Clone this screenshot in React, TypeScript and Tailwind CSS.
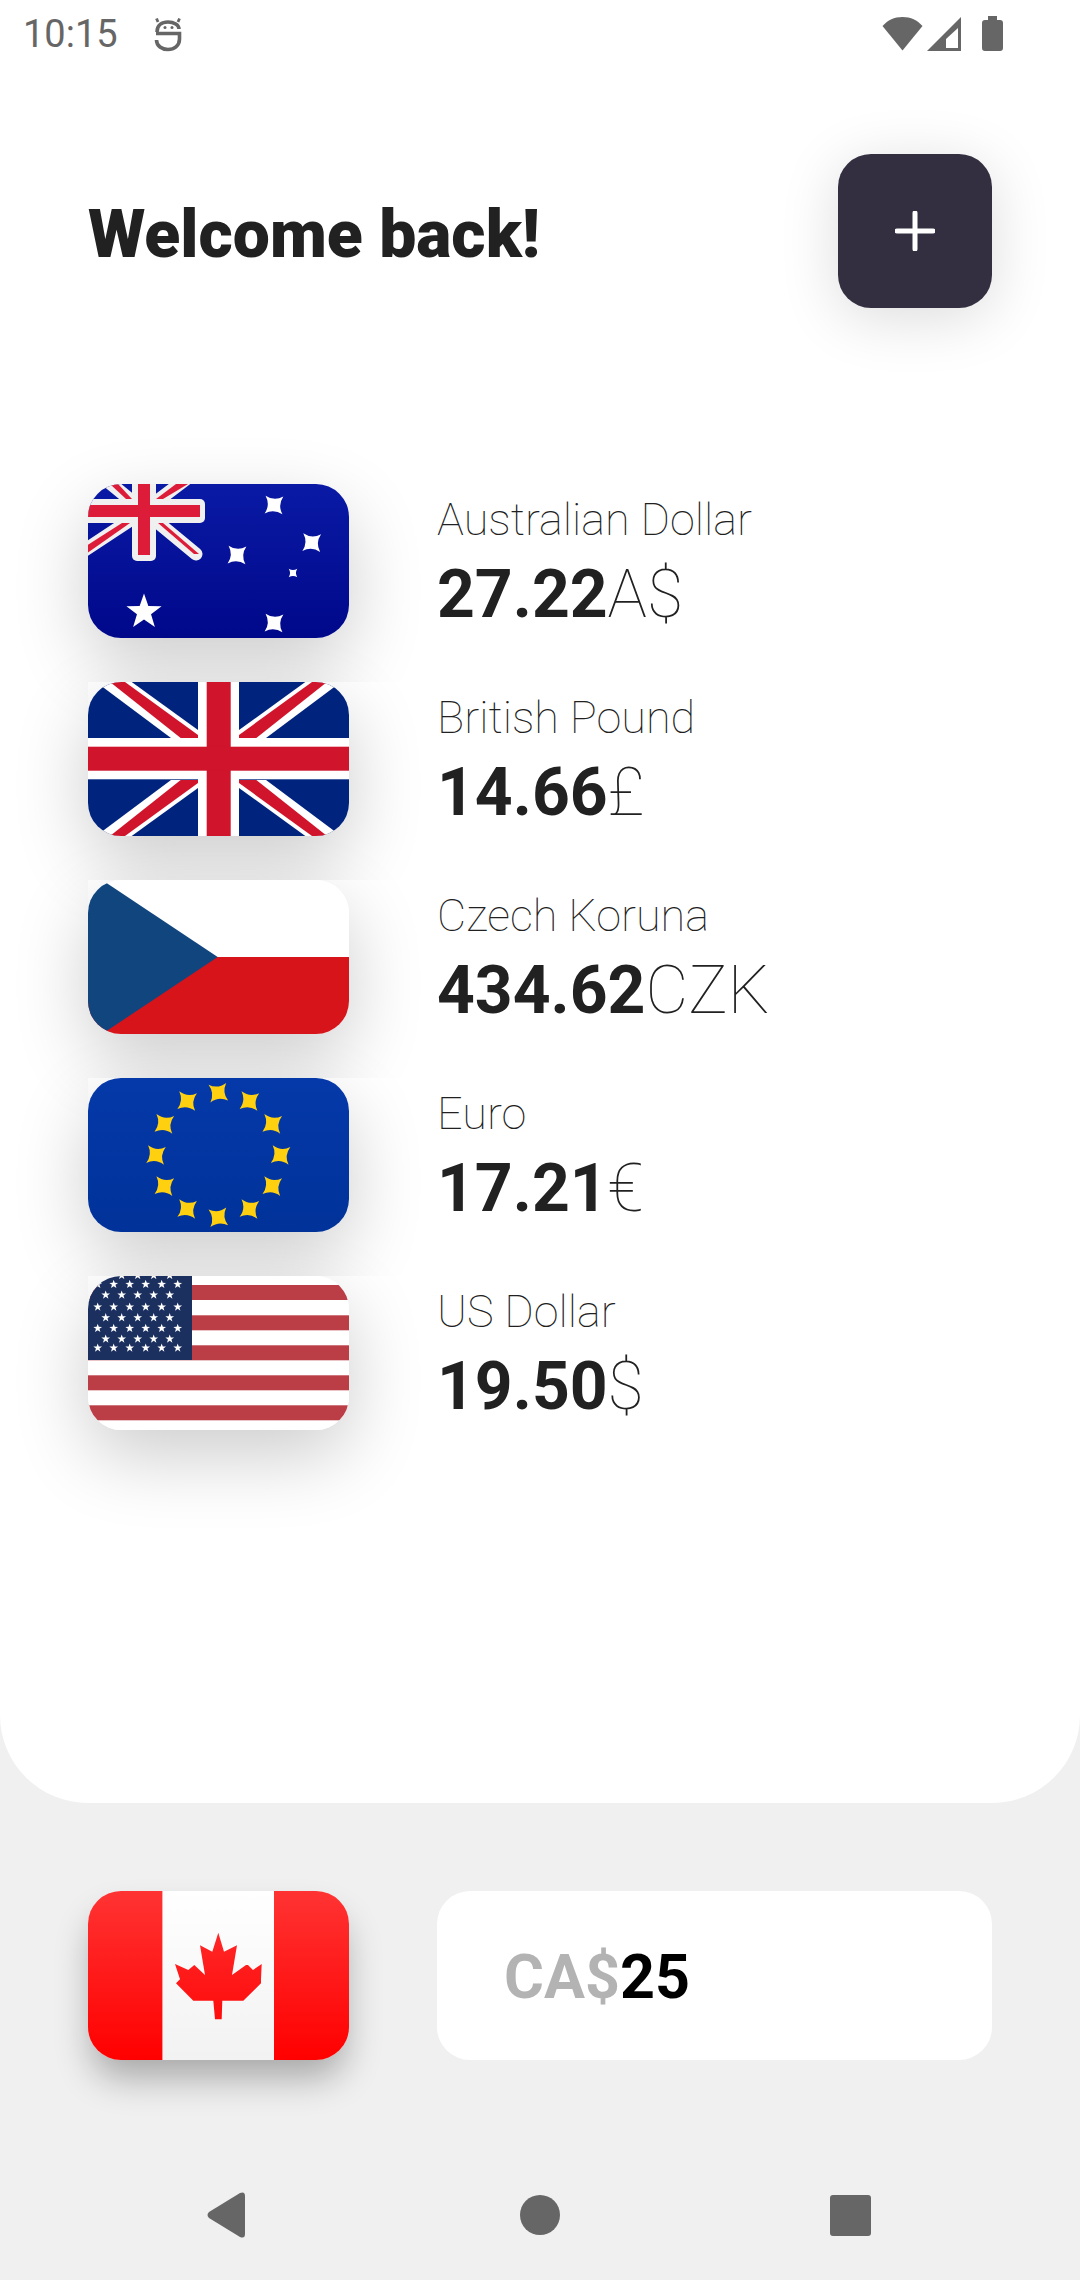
import React from "react";

const star4 = "M-8.9,-8.9 Q0,-3.5 8.9,-8.9 Q3.5,0 8.9,8.9 Q0,3.5 -8.9,8.9 Q-3.5,0 -8.9,-8.9Z";

// five point star centred on 0,0 with radius 1
const star5 = "M0,-1 L0.235,-0.324 L0.951,-0.309 L0.38,0.124 L0.588,0.809 L0,0.4 L-0.588,0.809 L-0.38,0.124 L-0.951,-0.309 L-0.235,-0.324Z";

const AustraliaFlag = () => (
  <svg viewBox="0 0 261 154" className="block w-full h-full">
    <defs>
      <linearGradient id="au" x1="0" y1="0" x2="0" y2="1">
        <stop offset="0" stopColor="#0a1aa5" />
        <stop offset="1" stopColor="#00088a" />
      </linearGradient>
    </defs>
    <rect width="261" height="154" fill="url(#au)" />
    <g stroke="#f0f0f0" strokeLinecap="round" fill="none" strokeWidth="13">
      <path d="M56 27 L108 70" />
      <path d="M56 27 L-12 72" />
      <path d="M56 27 L110 -14" />
      <path d="M56 27 L6 -14" />
    </g>
    <rect x="-6" y="15" width="123" height="24" rx="5" fill="#f0f0f0" />
    <rect x="44" y="-5" width="24" height="82" rx="5" fill="#f0f0f0" />
    <g fill="#dc1c38">
      <polygon points="70,39 75,39 111,70 106,70" />
      <polygon points="42,39 34,39 -2,62 -2,70" />
      <polygon points="68,15 75,15 100,0 88,0" />
      <polygon points="44,15 38,15 22,0 30,0" />
      <rect x="0" y="21" width="112" height="12" />
      <rect x="50" y="0" width="12" height="71" />
    </g>
    <g fill="#fff">
      <path d={star4} transform="translate(186 21) rotate(3)" />
      <path d={star4} transform="translate(223.7 58.7) rotate(3)" />
      <path d={star4} transform="translate(149 71) rotate(3)" />
      <path d={star4} transform="translate(205 89) scale(0.48)" />
      <path d={star4} transform="translate(186 139) rotate(3)" />
      <path d={star5} transform="translate(56 128) scale(18.5)" />
    </g>
  </svg>
);

const UkFlag = () => {
  const white = "8,0 83,56 110,56 110,48 43.7,0";
  const red = "22,0 37,0 110,53 110,56 92.7,56";
  const flips = ["", "translate(261 0) scale(-1 1)", "translate(0 154) scale(1 -1)", "translate(261 154) scale(-1 -1)"];
  return (
    <svg viewBox="0 0 261 154" className="block w-full h-full">
      <rect width="261" height="154" fill="#00247d" />
      {flips.map((t) => (
        <g key={t} transform={t}>
          <polygon points={white} fill="#fff" />
          <polygon points={red} fill="#cf142b" />
        </g>
      ))}
      <rect x="110" width="41" height="154" fill="#fff" />
      <rect y="56" width="261" height="41.3" fill="#fff" />
      <rect x="118.7" width="24" height="154" fill="#cf142b" />
      <rect y="64.7" width="261" height="24" fill="#cf142b" />
    </svg>
  );
};

const CzechFlag = () => (
  <svg viewBox="0 0 261 154" className="block w-full h-full">
    <rect width="261" height="77" fill="#fff" />
    <rect y="77" width="261" height="77" fill="#d7141a" />
    <polygon points="-1,-10 129.7,77 -1,164" fill="#11457e" />
  </svg>
);

const EuFlag = () => (
  <svg viewBox="0 0 261 154" className="block w-full h-full">
    <defs>
      <linearGradient id="eu" x1="0" y1="0" x2="0" y2="1">
        <stop offset="0" stopColor="#0539a9" />
        <stop offset="1" stopColor="#003299" />
      </linearGradient>
    </defs>
    <rect width="261" height="154" fill="url(#eu)" />
    {Array.from({ length: 12 }).map((_, i) => {
      const a = (i * Math.PI) / 6;
      const x = 130.3 + 62.3 * Math.sin(a);
      const y = 77 - 62.3 * Math.cos(a);
      return <path key={i} d={star4} fill="#ffd010" transform={`translate(${x} ${y}) rotate(${i % 6 === 0 ? -6 : 6})`} />;
    })}
  </svg>
);

const usRows = [-0.7, 8.3, 19, 31, 41.7, 52.3, 63, 72];

const UsFlag = () => (
  <svg viewBox="0 0 261 154" className="block w-full h-full">
    <rect width="261" height="154" fill="#fff" />
    {[9, 39.3, 69.3, 99.3, 129.3].map((y) => (
      <rect key={y} y={y} width="261" height="15" fill="#bb3e46" />
    ))}
    <rect width="104" height="84" fill="#1b305f" />
    {usRows.map((y, r) => {
      const odd = r % 2 === 1;
      const xs = odd ? [9.7, 25.7, 41.7, 57.7, 73.7, 89.7] : [17.7, 33.7, 49.7, 65.7, 81.7];
      return xs.map((x) => <path key={`${r}-${x}`} d={star5} fill="#fff" transform={`translate(${x} ${y}) scale(4.6)`} />);
    })}
  </svg>
);

const CanadaFlag = () => (
  <svg viewBox="0 0 261 169" className="block w-full h-full">
    <defs>
      <linearGradient id="caRed" gradientUnits="userSpaceOnUse" x1="0" y1="0" x2="0" y2="169">
        <stop offset="0" stopColor="#ff3333" />
        <stop offset="1" stopColor="#ff0000" />
      </linearGradient>
      <linearGradient id="caWhite" gradientUnits="userSpaceOnUse" x1="0" y1="0" x2="0" y2="169">
        <stop offset="0" stopColor="#ffffff" />
        <stop offset="1" stopColor="#f2f2f2" />
      </linearGradient>
    </defs>
    <rect width="261" height="169" fill="url(#caRed)" />
    <rect x="74.4" width="111.6" height="169" fill="url(#caWhite)" />
    <polygon
      fill="url(#caRed)"
      points="130.3,41.7 136,60.7 149,54.3 144,84 158,74 160,74 165,79 173.7,73 173,88.3 173,92.3 155.3,109.7 134.3,109.7 133.7,128.3 127,128.3 125.3,109.7 105.3,109.7 88,92.3 92,88.3 87,73 100.3,79 106.3,74 117,84 112,54.3 124.3,60.7"
    />
  </svg>
);

const accounts = [
  { name: "Australian Dollar", amount: "27.22", unit: "A$", flag: <AustraliaFlag /> },
  { name: "British Pound", amount: "14.66", unit: "£", flag: <UkFlag /> },
  { name: "Czech Koruna", amount: "434.62", unit: "CZK", flag: <CzechFlag /> },
  { name: "Euro", amount: "17.21", unit: "€", flag: <EuFlag /> },
  { name: "US Dollar", amount: "19.50", unit: "$", flag: <UsFlag /> },
];

const StatusBar = () => (
  <div className="flex h-[63px] items-center justify-between pl-[23px] pr-[77px] pt-[4px]">
    <div className="flex items-center">
      <span className="text-[38px] leading-none text-[#666666] font-normal">10:15</span>
      <svg width="28" height="36" viewBox="0 0 28 36" className="ml-[36px]" fill="none" stroke="#666666" strokeWidth="3.6">
        <path d="M3 16 C3 9 8 6 14 6 C20 6 25 9 25 13" />
        <path d="M2 17.5 H25.5 V23 C25.5 30 20 33.5 14 33.5 C8 33.5 2.5 30 2.5 24" />
        <path d="M4 6 L2.5 2.5 M24 6 L25.5 2.5" strokeWidth="2.8" />
        <circle cx="11" cy="11.5" r="1.5" fill="#666666" stroke="none" />
        <circle cx="18" cy="11.5" r="1.5" fill="#666666" stroke="none" />
      </svg>
    </div>
    <div className="flex items-center">
      <svg width="41" height="35" viewBox="0 0 41 35" fill="#666666">
        <path d="M0.5 10 C6 4 12 1 20.5 1 C29 1 35 4 40.5 10 L20.5 34.5 Z" />
      </svg>
      <svg width="35" height="35" viewBox="0 0 35 35" className="ml-[4px]" fill="#666666">
        <path fillRule="evenodd" d="M34 1 V35 H0 Z M31 12 L19 23 V32 H31 Z" />
      </svg>
      <svg width="21" height="35" viewBox="0 0 21 35" className="ml-[20px]" fill="#666666">
        <path d="M6 0 H15 V4 H18 A3 3 0 0 1 21 7 V32 A3 3 0 0 1 18 35 H3 A3 3 0 0 1 0 32 V7 A3 3 0 0 1 3 4 H6 Z" />
      </svg>
    </div>
  </div>
);

export default function App() {
  return (
    <div className="flex h-[2280px] w-[1080px] flex-col bg-[#f0f0f0] font-[Roboto,sans-serif]">
      {/* Main panel */}
      <div className="h-[1803px] rounded-b-[88px] bg-white">
        <StatusBar />

        <div className="mt-[91px] flex items-center justify-between px-[88px]">
          <h1 className="relative top-[4px] text-[66px] font-black leading-none text-[#212121]">Welcome back!</h1>
          <button className="flex h-[154px] w-[154px] items-center justify-center rounded-[33px] bg-[#332f40] shadow-[0_10px_60px_rgba(0,0,0,0.14)]">
            <svg width="40" height="40" viewBox="0 0 40 40" stroke="#ffffff" strokeWidth="5" strokeLinecap="round">
              <path d="M20 2 V38 M2 20 H38" />
            </svg>
          </button>
        </div>

        <div className="mt-[176px] flex flex-col gap-[44px] pl-[88px] pr-[88px]">
          {accounts.map((a) => (
            <div key={a.name} className="flex h-[154px] bg-white">
              <div className="h-[154px] w-[261px] overflow-hidden rounded-[33px] shadow-[0_26px_74px_rgba(0,0,0,0.2)]">{a.flag}</div>
              <div className="ml-[88px] flex flex-col pt-[11px] text-[#212121]">
                <div className="text-[45px] font-thin leading-[50px]">{a.name}</div>
                <div className="mt-[11px] text-[66px] font-bold leading-[78px]">
                  {a.amount}
                  <span className="font-thin">{a.unit}</span>
                </div>
              </div>
            </div>
          ))}
        </div>
      </div>

      {/* Converter input */}
      <div className="mt-[88px] flex gap-[88px] px-[88px]">
        <div className="h-[169px] w-[261px] shrink-0 overflow-hidden rounded-[33px] shadow-[0_22px_36px_-4px_rgba(0,0,0,0.3)]">
          <CanadaFlag />
        </div>
        <div className="flex h-[169px] flex-1 items-center rounded-[33px] bg-white pl-[67px] pt-[3px] text-[61px] font-bold leading-none">
          <span className="text-[#b3b3b3]">CA$</span>
          <span className="text-black">25</span>
        </div>
      </div>

      {/* Android nav bar */}
      <div className="mt-[132px] flex items-center pl-[207px]">
        <svg width="38" height="46" viewBox="0 0 38 46" fill="#666666">
          <path d="M33 1 Q38 -1 38 4 V42 Q38 47 33 45 L2 26 Q-1 23 2 20 Z" />
        </svg>
        <div className="ml-[275px] h-[40px] w-[40px] rounded-full bg-[#666666]" />
        <div className="ml-[270px] h-[41px] w-[41px] rounded-[3px] bg-[#666666]" />
      </div>
    </div>
  );
}
